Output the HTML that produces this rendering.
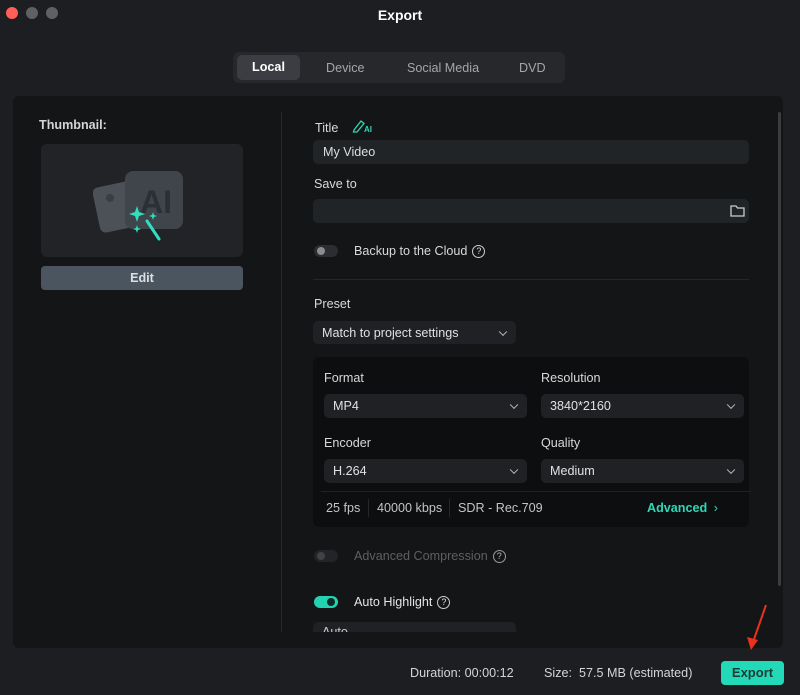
<!DOCTYPE html>
<html><head><style>
*{margin:0;padding:0;box-sizing:border-box}
body{width:800px;height:695px;background:#1d1e22;font-family:"Liberation Sans",sans-serif;color:#e4e5e7;position:relative;overflow:hidden;font-size:12.6px}
.a{position:absolute}
.dot{width:12px;height:12px;border-radius:50%;top:7px}
.inp{background:#212427;border-radius:5px}
.dd{background:#1f2124;border-radius:5px;color:#e0e1e3;padding-left:9px;display:flex;align-items:center}
.chev{position:absolute;right:10px;top:50%;width:6px;height:6px;border-right:1.5px solid #bbb;border-bottom:1.5px solid #bbb;transform:translateY(-70%) rotate(45deg)}
.lbl{color:#d8d9db}
.q{display:inline-block;width:13px;height:13px;border:1.3px solid #cfd0d2;border-radius:50%;font-size:9px;text-align:center;line-height:11px;vertical-align:middle;margin-left:5px}
.tg{width:24px;height:12px;border-radius:6px;background:#2b2d31}
.tg i{position:absolute;width:8px;height:8px;border-radius:50%;background:#8a8c90;top:2px;left:3px}
</style></head><body>
<div class="a dot" style="left:6px;background:#fe5f57"></div>
<div class="a dot" style="left:26px;background:#5f6064"></div>
<div class="a dot" style="left:46px;background:#5f6064"></div>
<div class="a" style="left:0;width:800px;top:7px;text-align:center;font-weight:bold;font-size:14px;color:#fff">Export</div>

<div class="a" style="left:233px;top:52px;width:332px;height:31px;background:#26282c;border-radius:6px"></div>
<div class="a" style="left:237px;top:55px;width:63px;height:25px;background:#3b3d42;border-radius:5px;text-align:center;line-height:25px;font-weight:bold;color:#fff">Local</div>
<div class="a" style="left:326px;top:61px;color:#a4a6aa">Device</div>
<div class="a" style="left:407px;top:61px;color:#a4a6aa">Social Media</div>
<div class="a" style="left:519px;top:61px;color:#a4a6aa">DVD</div>

<div class="a" style="left:13px;top:96px;width:770px;height:552px;background:#141517;border-radius:6px"></div>
<div class="a" style="left:281px;top:112px;width:1px;height:520px;background:#26282b"></div>
<div class="a" style="left:778px;top:112px;width:3px;height:474px;background:#3a3c40;border-radius:2px"></div>

<div class="a" style="left:39px;top:118px;font-weight:bold;color:#d4d5d7">Thumbnail:</div>
<div class="a" style="left:41px;top:144px;width:202px;height:113px;background:#222326;border-radius:6px"></div>
<svg class="a" style="left:93px;top:168px" width="95" height="75" viewBox="0 0 95 75">
<rect x="3" y="16" width="40" height="46" rx="6" fill="#4c5157" transform="rotate(-12 23 39)"/>
<circle cx="17" cy="30" r="4" fill="#3a3e43"/>
<rect x="32" y="3" width="58" height="58" rx="8" fill="#3f454b"/>
<text x="47" y="45" font-family="Liberation Sans" font-weight="bold" font-size="32" fill="#2a3036">AI</text>
<path d="M44 38 l2 6 6 2 -6 2 -2 6 -2 -6 -6 -2 6 -2z" fill="#2fe0c0"/>
<path d="M60 44 l1 3 3 1 -3 1 -1 3 -1 -3 -3 -1 3 -1z" fill="#2fe0c0"/>
<path d="M44 57 l1 3 3 1 -3 1 -1 3 -1 -3 -3 -1 3 -1z" fill="#2fe0c0"/>
<path d="M54 53 L66 71" stroke="#2fe0c0" stroke-width="3" stroke-linecap="round"/>
</svg>
<div class="a" style="left:41px;top:266px;width:202px;height:24px;background:#4b5560;border-radius:4px;text-align:center;line-height:24px;font-weight:bold;color:#dde0e3">Edit</div>

<div class="a lbl" style="left:315px;top:121px">Title</div>
<svg class="a" style="left:352px;top:119px" width="20" height="14"><path d="M2 11 L9 2 L12 4.5 L5 13 L1.5 13z" fill="none" stroke="#2fd7b5" stroke-width="1.3"/><text x="12" y="13" font-family="Liberation Sans" font-weight="bold" font-size="8" fill="#2fd7b5">AI</text></svg>
<div class="a inp" style="left:313px;top:140px;width:436px;height:24px;padding-left:10px;line-height:24px;color:#dcdde0">My Video</div>
<div class="a lbl" style="left:314px;top:177px">Save to</div>
<div class="a inp" style="left:313px;top:199px;width:436px;height:24px"></div>
<svg class="a" style="left:730px;top:205px" width="15" height="12"><path d="M1 1h5l1.5 2H14v8H1z" fill="none" stroke="#ccc" stroke-width="1.3"/></svg>
<div class="a tg" style="left:314px;top:245px"><i></i></div>
<div class="a lbl" style="left:354px;top:244px">Backup to the Cloud<span class="q">?</span></div>
<div class="a" style="left:313px;top:279px;width:436px;height:1px;background:#25272a"></div>
<div class="a lbl" style="left:314px;top:297px">Preset</div>
<div class="a dd" style="left:313px;top:321px;width:203px;height:23px">Match to project settings<span class="chev"></span></div>

<div class="a" style="left:313px;top:357px;width:436px;height:170px;background:#0d0e10;border-radius:6px"></div>
<div class="a lbl" style="left:324px;top:371px">Format</div>
<div class="a lbl" style="left:541px;top:371px">Resolution</div>
<div class="a dd" style="left:324px;top:394px;width:203px;height:24px">MP4<span class="chev"></span></div>
<div class="a dd" style="left:541px;top:394px;width:203px;height:24px">3840*2160<span class="chev"></span></div>
<div class="a lbl" style="left:324px;top:436px">Encoder</div>
<div class="a lbl" style="left:541px;top:436px">Quality</div>
<div class="a dd" style="left:324px;top:459px;width:203px;height:24px">H.264<span class="chev"></span></div>
<div class="a dd" style="left:541px;top:459px;width:203px;height:24px">Medium<span class="chev"></span></div>
<div class="a" style="left:321px;top:491px;width:430px;height:1px;background:#202225"></div>
<div class="a" style="left:326px;top:501px;color:#c3c4c7">25 fps</div>
<div class="a" style="left:368px;top:499px;width:1px;height:18px;background:#25272a"></div>
<div class="a" style="left:377px;top:501px;color:#c3c4c7">40000 kbps</div>
<div class="a" style="left:449px;top:499px;width:1px;height:18px;background:#25272a"></div>
<div class="a" style="left:458px;top:501px;color:#c3c4c7">SDR - Rec.709</div>
<div class="a" style="left:647px;top:501px;color:#2fd7b5;font-weight:bold">Advanced <span style="font-weight:normal;margin-left:3px">›</span></div>

<div class="a tg" style="left:314px;top:550px;background:#222427"><i style="background:#404246"></i></div>
<div class="a" style="left:354px;top:549px;color:#5d5f63">Advanced Compression<span class="q" style="border-color:#9a9b9e;color:#bbb">?</span></div>
<div class="a tg" style="left:314px;top:596px;background:#22d2b0"><i style="background:#0f2a26;left:13px"></i></div>
<div class="a lbl" style="left:354px;top:595px;color:#e4e5e7">Auto Highlight<span class="q">?</span></div>
<div class="a" style="left:313px;top:622px;width:203px;height:10px;background:#1f2124;border-radius:5px 5px 0 0;overflow:hidden;color:#ccc;padding-left:9px;line-height:20px">Auto</div>

<div class="a" style="left:410px;top:666px;color:#d4d5d7">Duration: 00:00:12</div>
<div class="a" style="left:544px;top:666px;color:#d4d5d7">Size:&nbsp; 57.5 MB (estimated)</div>
<div class="a" style="left:721px;top:661px;width:63px;height:24px;background:#23dab8;border-radius:4px;text-align:center;line-height:24px;font-weight:bold;color:#1c3a36;font-size:13px">Export</div>
<svg class="a" style="left:740px;top:600px" width="30" height="55"><path d="M26 5 L12 45" stroke="#e8321e" stroke-width="2"/><path d="M7 37 L11 50 L18 40z" fill="#e8321e"/></svg>
</body></html>
